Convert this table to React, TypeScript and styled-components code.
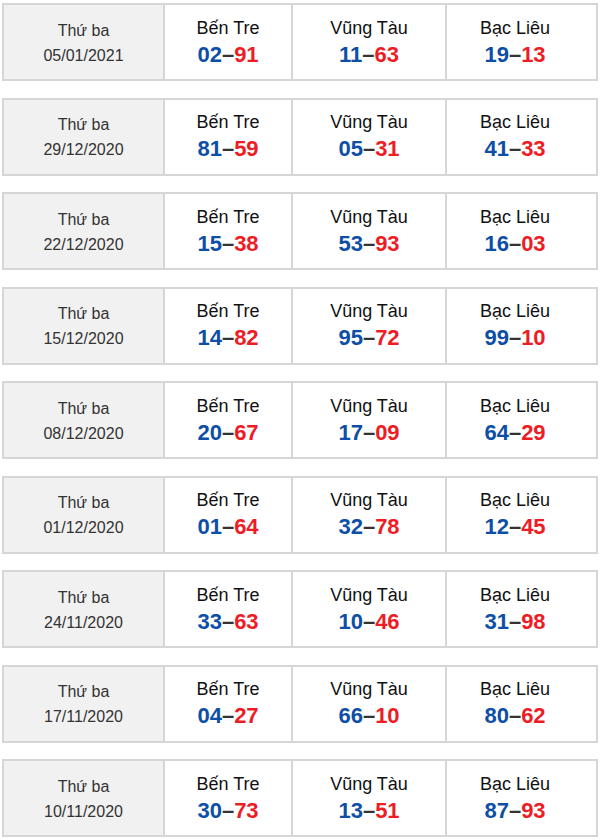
import React from "react";
import styled, { createGlobalStyle } from "styled-components";

const Global = createGlobalStyle`
  html, body { margin: 0; padding: 0; background: #fff; }
  body { font-family: "Liberation Sans", Arial, sans-serif; }
`;

const Page = styled.div`
  width: 600px;
  padding: 3px 2px 0 2px;
  box-sizing: border-box;
  display: flex;
  flex-direction: column;
  gap: 16.5px;
`;

const Table = styled.div`
  display: grid;
  grid-template-columns: 161px 128px 154px 1fr;
  height: 78px;
  width: 596px;
  box-sizing: border-box;
  border: 2px solid #d6d6d6;
`;

const DateCell = styled.div`
  background: #f1f1f1;
  border-right: 2px solid #d6d6d6;
  display: flex;
  flex-direction: column;
  align-items: center;
  justify-content: center;
  gap: 6px;
  color: #333;
  font-size: 16px;
  line-height: 19px;
  padding-top: 1px;
`;

const ResultCell = styled.div<{ $last?: boolean }>`
  border-right: ${(p) => (p.$last ? "none" : "2px solid #d6d6d6")};
  padding-right: ${(p) => (p.$last ? "13px" : "0")};
  display: flex;
  flex-direction: column;
  align-items: center;
  justify-content: center;
  gap: 3px;
`;

const Station = styled.div`
  font-size: 18px;
  line-height: 21px;
  color: #111;
`;

const Numbers = styled.div`
  font-size: 22px;
  line-height: 25px;
  font-weight: bold;
  color: #333;
`;

const Num = styled.span<{ $red?: boolean }>`
  color: ${(p) => (p.$red ? "#ee1c25" : "#0d4ea6")};
`;

type Row = { date: string; res: [string, string][] };

const rows: Row[] = [
  { date: "05/01/2021", res: [["02", "91"], ["11", "63"], ["19", "13"]] },
  { date: "29/12/2020", res: [["81", "59"], ["05", "31"], ["41", "33"]] },
  { date: "22/12/2020", res: [["15", "38"], ["53", "93"], ["16", "03"]] },
  { date: "15/12/2020", res: [["14", "82"], ["95", "72"], ["99", "10"]] },
  { date: "08/12/2020", res: [["20", "67"], ["17", "09"], ["64", "29"]] },
  { date: "01/12/2020", res: [["01", "64"], ["32", "78"], ["12", "45"]] },
  { date: "24/11/2020", res: [["33", "63"], ["10", "46"], ["31", "98"]] },
  { date: "17/11/2020", res: [["04", "27"], ["66", "10"], ["80", "62"]] },
  { date: "10/11/2020", res: [["30", "73"], ["13", "51"], ["87", "93"]] },
];

const stations = ["Bến Tre", "Vũng Tàu", "Bạc Liêu"];

export default function App() {
  return (
    <>
      <Global />
      <Page>
        {rows.map((r) => (
          <Table key={r.date}>
            <DateCell>
              <div>Thứ ba</div>
              <div>{r.date}</div>
            </DateCell>
            {r.res.map(([a, b], i) => (
              <ResultCell key={i} $last={i === 2}>
                <Station>{stations[i]}</Station>
                <Numbers>
                  <Num>{a}</Num>–<Num $red>{b}</Num>
                </Numbers>
              </ResultCell>
            ))}
          </Table>
        ))}
      </Page>
    </>
  );
}
